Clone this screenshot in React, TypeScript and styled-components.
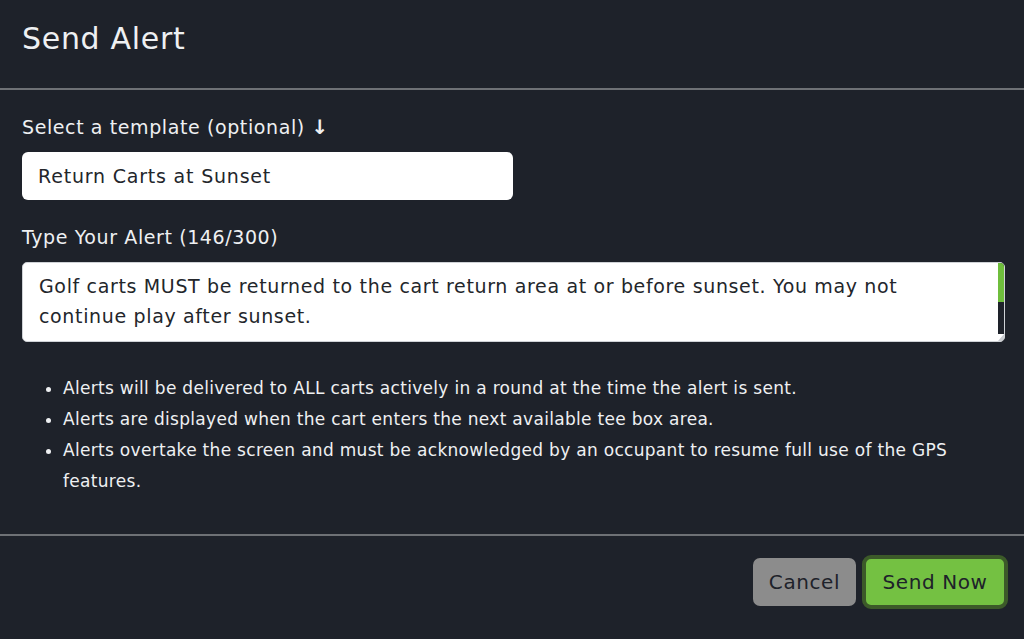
import React from "react";
import styled, { createGlobalStyle } from "styled-components";

const GlobalStyle = createGlobalStyle`
  html, body {
    margin: 0;
    padding: 0;
    background: #1e222a;
  }
  body {
    font-family: "DejaVu Sans", "Open Sans", sans-serif;
  }
`;

const bullets = [
  "Alerts will be delivered to ALL carts actively in a round at the time the alert is sent.",
  "Alerts are displayed when the cart enters the next available tee box area.",
  "Alerts overtake the screen and must be acknowledged by an occupant to resume full use of the GPS features.",
];

const message =
  "Golf carts MUST be returned to the cart return area at or before sunset. You may not continue play after sunset.";

const App: React.FC = () => {
  return (
    <>
      <GlobalStyle />
      <Modal>
        <Header>
          <Title>Send Alert</Title>
        </Header>

        <Body>
          <Label>
            Select a template (optional) <Arrow>↓</Arrow>
          </Label>
          <TemplateInput type="text" defaultValue="Return Carts at Sunset" />

          <Label $top={24}>Type Your Alert (146/300)</Label>
          <AlertBox>
            <AlertText defaultValue={message} />
            <ScrollTrack>
              <ScrollThumb />
              <Resizer viewBox="0 0 6 7">
                <path d="M6 0 L6 7 L0 7 Z" fill="#c8cbcf" />
              </Resizer>
            </ScrollTrack>
          </AlertBox>

          <Notes>
            {bullets.map((b) => (
              <li key={b}>{b}</li>
            ))}
          </Notes>
        </Body>

        <Footer>
          <Button type="button" $variant="cancel">
            Cancel
          </Button>
          <Button type="button" $variant="send">
            Send Now
          </Button>
        </Footer>
      </Modal>
    </>
  );
};

export default App;

/* ================= styled ================= */

const Modal = styled.div`
  width: 1024px;
  height: 639px;
  background: #1e222a;
  color: #eef0f2;
  display: flex;
  flex-direction: column;
  box-sizing: border-box;
`;

const Header = styled.div`
  height: 90px;
  padding: 0 22px;
  display: flex;
  align-items: center;
  border-bottom: 2px solid #6e7175;
  box-sizing: border-box;
`;

const Title = styled.h1`
  margin: 0 0 12px;
  font-size: 30px;
  font-weight: 400;
  letter-spacing: 0.7px;
`;

const Body = styled.div`
  padding: 24px 19px 0 22px;
  display: flex;
  flex-direction: column;
  height: 446px;
  box-sizing: border-box;
  border-bottom: 2px solid #6e7175;
`;

const Label = styled.label<{ $top?: number }>`
  display: block;
  margin-top: ${(p) => p.$top ?? 0}px;
  margin-bottom: 12px;
  font-size: 19px;
  line-height: 26px;
  letter-spacing: 0.6px;
`;

const Arrow = styled.span`
  font-weight: 700;
  font-size: 20px;
`;

const TemplateInput = styled.input`
  width: 491px;
  height: 48px;
  box-sizing: border-box;
  border: none;
  border-radius: 6px;
  padding: 0 16px;
  background: #ffffff;
  color: #23262b;
  font-family: inherit;
  font-size: 19px;
  letter-spacing: 0.8px;
  outline: none;
`;

const AlertBox = styled.div`
  width: 983px;
  height: 80px;
  box-sizing: border-box;
  display: flex;
  background: #ffffff;
  border: 1px solid #cfd2d6;
  border-radius: 5px;
  overflow: hidden;
`;

const AlertText = styled.textarea`
  flex: 1;
  border: none;
  padding: 8px 16px;
  background: transparent;
  color: #23262b;
  font-family: inherit;
  font-size: 19px;
  line-height: 30px;
  letter-spacing: 0.65px;
  outline: none;
  resize: none;
  overflow: hidden;
`;

const ScrollTrack = styled.div`
  width: 6px;
  display: flex;
  flex-direction: column;
  background: #1e222a;
`;

const ScrollThumb = styled.div`
  height: 39px;
  background: #6fbe3c;
`;

const Resizer = styled.svg`
  margin-top: auto;
  width: 6px;
  height: 7px;
  background: #ffffff;
`;

const Notes = styled.ul`
  margin: 31px 0 0;
  padding-left: 41px;
  font-size: 17px;
  line-height: 31px;
  letter-spacing: 0.3px;
  color: #eef0f2;
`;

const Footer = styled.div`
  display: flex;
  justify-content: flex-end;
  align-items: center;
  gap: 6px;
  padding: 19px 16px 0 0;
`;

const Button = styled.button<{ $variant: "cancel" | "send" }>`
  font-family: inherit;
  font-size: 20px;
  letter-spacing: 0.6px;
  color: #1e222a;
  border-radius: 7px;
  cursor: pointer;
  box-sizing: border-box;
  padding: 0;
  ${(p) =>
    p.$variant === "cancel"
      ? `
    width: 103px;
    height: 48px;
    background: #8c8c8c;
    border: none;
  `
      : `
    width: 146px;
    height: 54px;
    background: #74c142;
    border: 4px solid #3c5a29;
    border-radius: 9px;
  `}
`;
